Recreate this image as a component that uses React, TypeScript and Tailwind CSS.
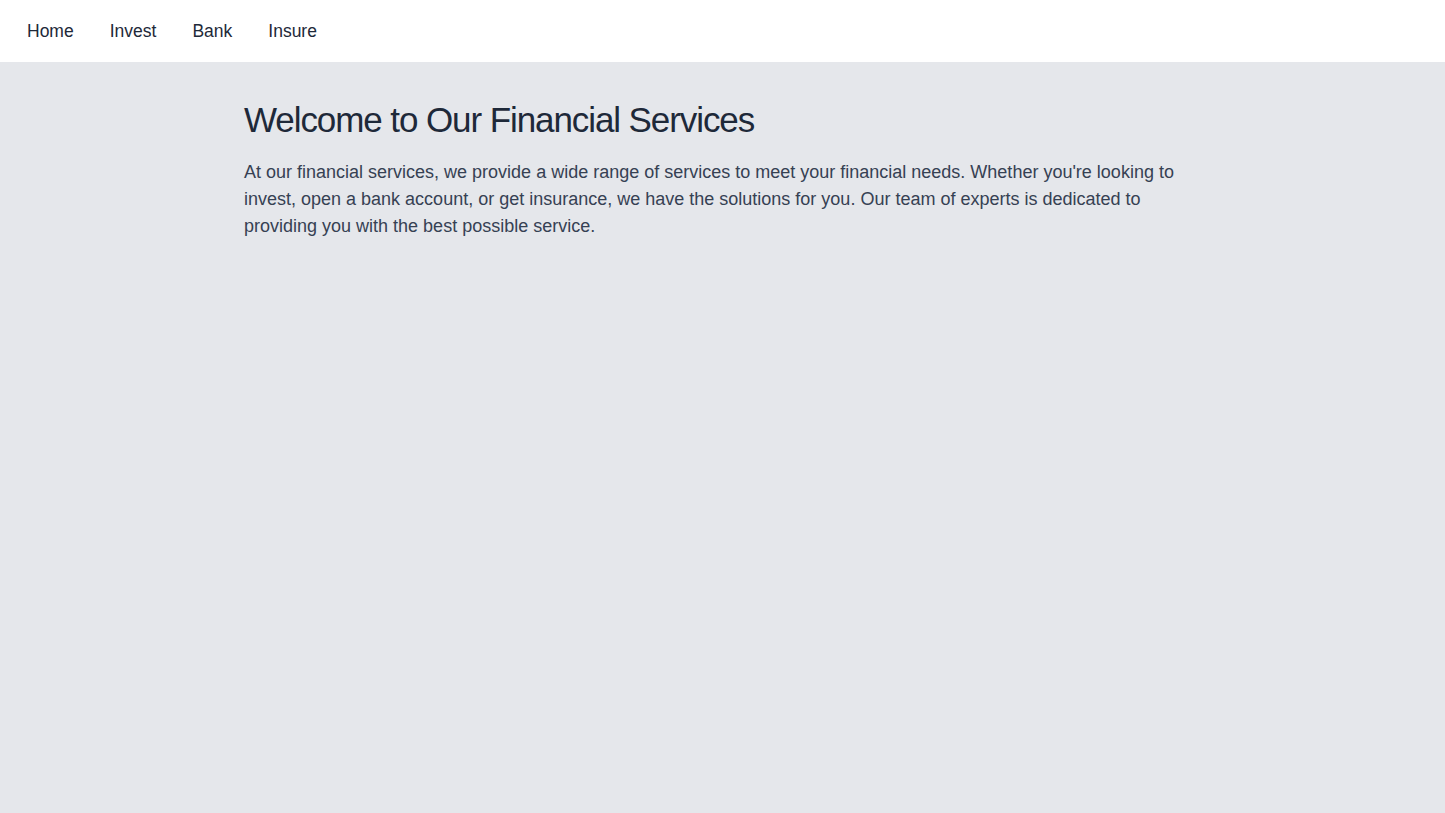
const links = ["Home", "Invest", "Bank", "Insure"];

export default function App() {
  return (
    <div
      className="min-h-screen bg-gray-200"
      style={{ fontFamily: '"Liberation Sans", Arial, sans-serif' }}
    >
      <nav className="flex h-[63px] items-center gap-9 border-b border-gray-200 bg-white px-[27px]">
        {links.map((link) => (
          <a key={link} href="#" className="text-[17.5px] leading-7 text-gray-800">
            {link}
          </a>
        ))}
      </nav>

      <main className="mx-auto max-w-[957px] pt-[37px]">
        <h1 className="text-[35px] leading-10 tracking-[-0.031em] text-gray-800">
          Welcome to Our Financial Services
        </h1>
        <p className="mt-[19px] text-lg leading-[27px] text-gray-700">
          At our financial services, we provide a wide range of services to meet your financial
          needs. Whether you're looking to invest, open a bank account, or get insurance, we have
          the solutions for you. Our team of experts is dedicated to providing you with the best
          possible service.
        </p>
      </main>
    </div>
  );
}
